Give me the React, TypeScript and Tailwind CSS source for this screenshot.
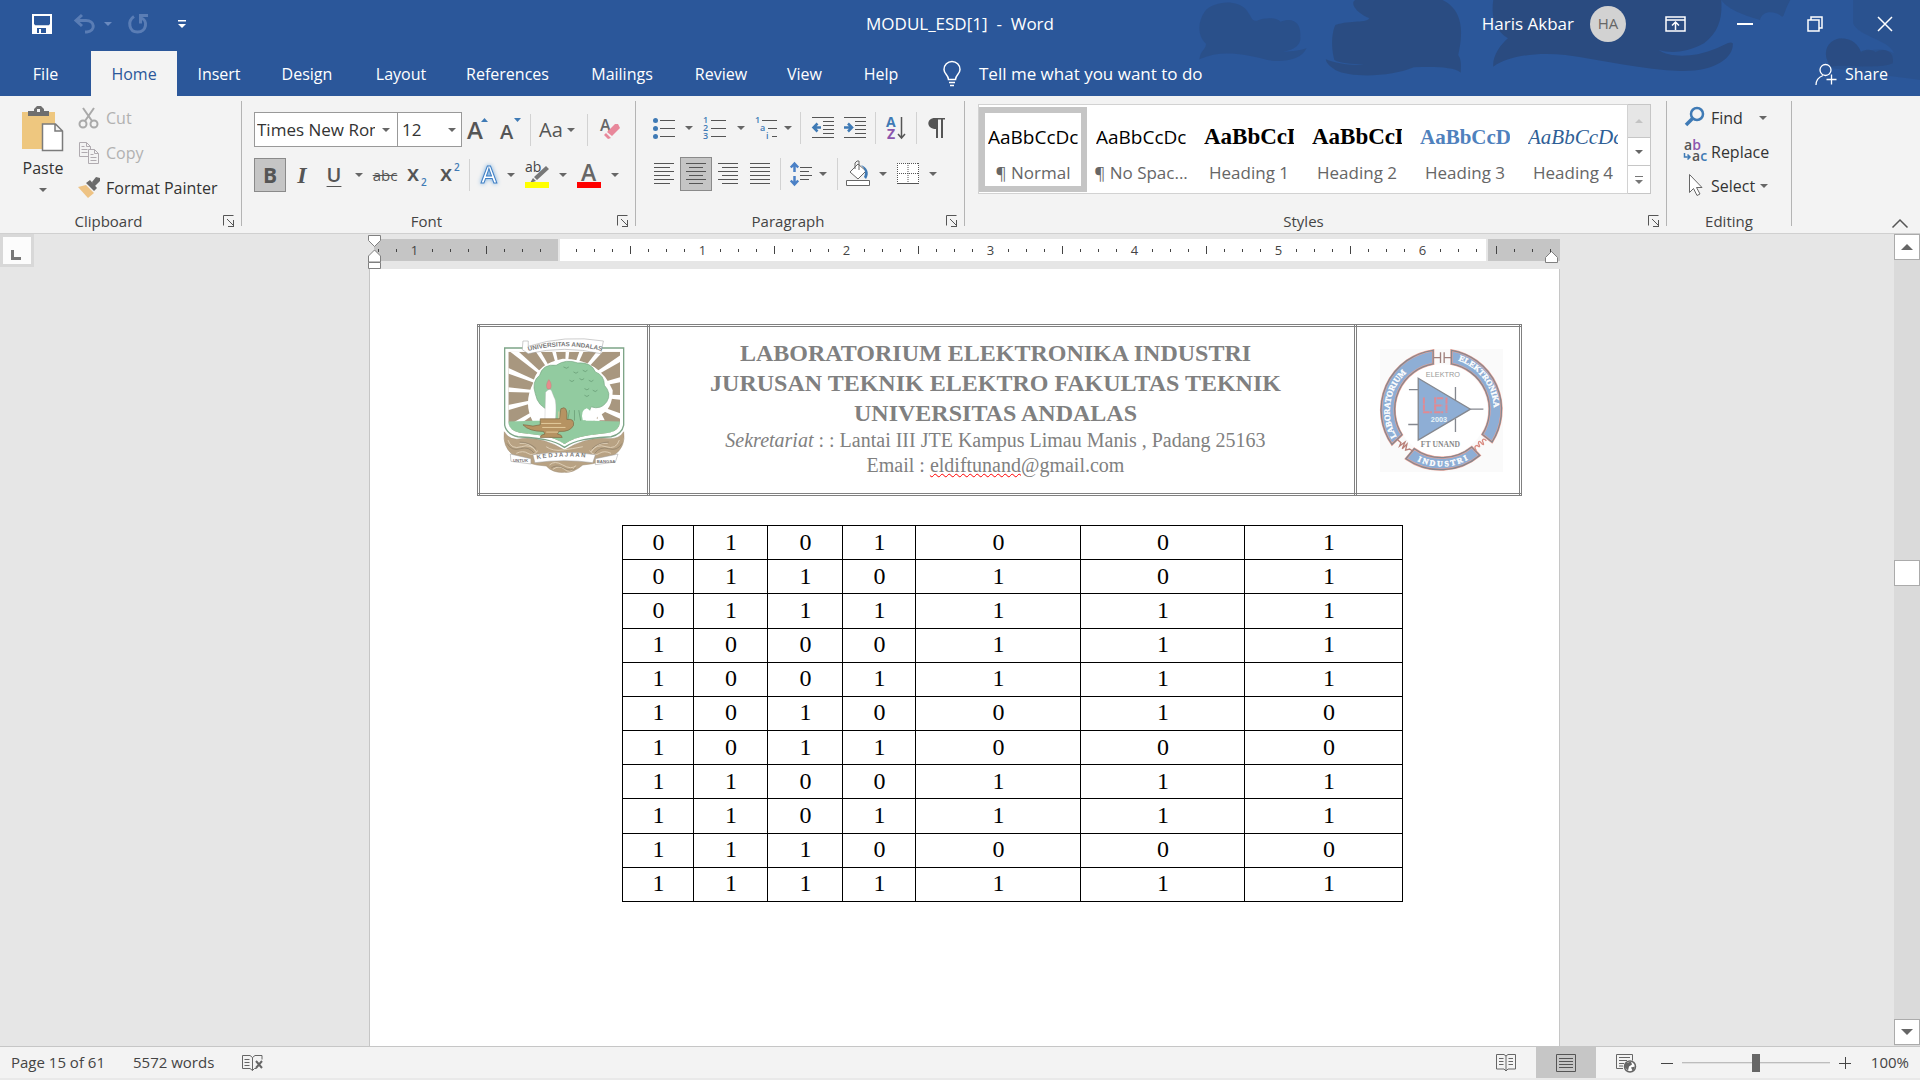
import { ReactNode } from 'react';
import classNames from 'clsx';

const tabs = [
  { name: 'File', width: 'w-[91px]' },
  { name: 'Home', width: 'w-[86px]' },
  { name: 'Insert', width: 'w-[84px]' },
  { name: 'Design', width: 'w-[92px]' },
  { name: 'Layout', width: 'w-[96px]' },
  { name: 'References', width: 'w-[117px]' },
  { name: 'Mailings', width: 'w-[112px]' },
  { name: 'Review', width: 'w-[86px]' },
  { name: 'View', width: 'w-[81px]' },
  { name: 'Help', width: 'w-[72px]' },
];

const sansSample = 'text-[19px] text-black';
const serifSample = "font-['Liberation_Serif',serif]";

const styleItems = [
  { name: '¶ Normal', sample: 'AaBbCcDc', className: sansSample },
  { name: '¶ No Spac...', sample: 'AaBbCcDc', className: sansSample },
  { name: 'Heading 1', sample: 'AaBbCcDc', className: classNames(serifSample, 'text-[23px] font-bold text-black') },
  { name: 'Heading 2', sample: 'AaBbCcDc', className: classNames(serifSample, 'text-[23px] font-bold text-black') },
  { name: 'Heading 3', sample: 'AaBbCcD', className: classNames(serifSample, 'text-[21px] font-bold text-[#4f81bd]') },
  { name: 'Heading 4', sample: 'AaBbCcDc', className: classNames(serifSample, 'text-[21px] text-[#2f6096] italic') },
];

const truthTable = [
  '0101001',
  '0110101',
  '0111111',
  '1000111',
  '1001111',
  '1010010',
  '1011000',
  '1100111',
  '1101111',
  '1110000',
  '1111111',
];

function Caret({ className = 'text-[#666]' }: { className?: string }) {
  return (
    <svg width="8" height="4" viewBox="0 0 8 4" className={className} fill="currentColor">
      <path d="M0 0h8L4 4z" />
    </svg>
  );
}

function DropButton({ label, className }: { label: string; className: string }) {
  return (
    <button aria-label={label} className={classNames('flex h-[34px] items-center justify-center', className)}>
      <Caret />
    </button>
  );
}

function ToolButton({
  label,
  className = 'w-8',
  active,
  children,
}: {
  label: string;
  className?: string;
  active?: boolean;
  children: ReactNode;
}) {
  return (
    <button
      aria-label={label}
      className={classNames('flex h-[34px] items-center justify-center text-[#555]', className, {
        'border border-[#8a8a8a] bg-[#c5c5c5]': active,
      })}
    >
      {children}
    </button>
  );
}

function Separator({ className = 'mx-1' }: { className?: string }) {
  return <div className={classNames('h-8 w-px bg-[#d2d2d2]', className)} />;
}

function Group({
  label,
  width,
  launcher = true,
  children,
}: {
  label: string;
  width: string;
  launcher?: boolean;
  children: ReactNode;
}) {
  return (
    <section aria-label={label} className={classNames('flex shrink-0', width)}>
      <div className="flex min-w-0 flex-1 flex-col">
        <div className="flex-1">{children}</div>
        <div className="flex h-6 items-center">
          <div className="flex-1 text-center text-[15px] leading-5 text-[#444]">{label}</div>
          {launcher && (
            <button aria-label={`${label} settings`} className="flex w-6 justify-center">
              <svg width="12" height="12" viewBox="0 0 12 12" fill="none" stroke="#555">
                <path d="M.5 10.5V.5h10M4 4l6 6M10.500 5v6.500M5 11.500h6" />
              </svg>
            </button>
          )}
        </div>
      </div>
      <div className="mt-1 h-[125px] w-px bg-[#b4b4b4]" />
    </section>
  );
}

// each entry is [x1, x2] of one text line, 4px apart
function LinesIcon({ lines }: { lines: number[][] }) {
  return (
    <svg width="22" height="22" viewBox="0 0 22 22" stroke="#555">
      {lines.map(([x1, x2], i) => (
        <line key={i} x1={x1} x2={x2} y1={0.5 + i * 4} y2={0.5 + i * 4} />
      ))}
    </svg>
  );
}

function TitlePattern() {
  return (
    <svg
      className="absolute top-0 right-0 h-full w-[820px]"
      viewBox="0 0 1568 288"
      preserveAspectRatio="none"
      fill="#2a4b80"
    >
      <path
        opacity=".6"
        d="M190 178C192 150 205 145 202 130C188 110 185 70 200 35C215 5 260 -5 280 30C290 50 290 65 300 62C320 50 340 55 345 65C370 50 385 70 383 110C385 130 375 150 350 155C370 155 385 150 395 145C385 180 350 188 320 180C270 160 230 150 190 178Z"
      />
      <path
        opacity=".9"
        d="M448 180C440 130 445 90 450 75C480 60 510 70 515 55C480 30 480 0 490 0H655C695 30 695 100 685 165C692 180 690 200 690 218C675 200 640 200 600 202C560 230 480 235 450 210C435 195 432 185 432 178C450 190 480 198 505 194C480 192 460 190 448 180Z"
      />
      <path d="M752 0H1188C1190 50 1185 95 1155 130C1120 160 1090 160 1068 150C1090 175 1140 170 1170 150C1190 140 1205 120 1210 130C1212 170 1180 215 1110 213C1040 210 960 180 890 165C830 155 780 170 752 200C750 170 765 135 780 115C752 90 748 40 752 0Z" />
      <path opacity=".6" d="M1188 0H1320C1305 40 1310 60 1300 45C1285 30 1265 35 1262 60C1240 50 1200 30 1188 0Z" />
      <path
        opacity=".4"
        d="M1440 0H1568V240C1520 230 1450 215 1400 205L1395 195C1385 165 1385 130 1410 116C1435 112 1450 130 1455 160C1480 145 1500 145 1518 160C1510 120 1450 110 1440 70Z"
      />
      <path
        opacity=".8"
        d="M1398 200C1380 165 1388 125 1412 116C1438 112 1450 135 1455 155C1468 145 1478 150 1483 157C1500 140 1520 155 1516 190C1490 210 1420 190 1398 200Z"
      />
    </svg>
  );
}

function TitleBar() {
  return (
    <div className="relative flex h-[51px] items-center pb-1">
      <div className="flex w-0 flex-1 items-center">
        <button aria-label="Save" className="ml-8">
          <svg width="20" height="20" viewBox="0 0 20 20" fill="none" stroke="#fff">
            <path strokeWidth="2" d="M1 1h18v18H1z" />
            <path fill="#fff" d="M1 12h18v7H1zM1 9l2 3h14l2-3v5H1z" />
            <path fill="#2b579a" stroke="none" d="M5 14h9v5H5z" />
            <path fill="#fff" stroke="none" d="M7 15h2v4H7z" />
          </svg>
        </button>
        <button aria-label="Undo" className="ml-5">
          <svg width="24" height="20" viewBox="0 0 24 20" fill="none" stroke="#5a7db5" strokeWidth="3">
            <path d="M10 1L4 6.500L10 12M4 6.500H14C23 6.500 24 17 15 18H13" />
          </svg>
        </button>
        <button aria-label="Undo history" className="ml-2">
          <Caret className="text-[#6a8abf]" />
        </button>
        <button aria-label="Redo" className="ml-4">
          <svg width="22" height="20" viewBox="0 0 22 20" fill="none" stroke="#5a7db5" strokeWidth="3">
            <path d="M6 2.500C-1 7 1 18 9.500 18C19 18 20 6 13 4M12.500 9.500V1.500H20" />
          </svg>
        </button>
        <button aria-label="Customize toolbar" className="ml-7">
          <svg width="8" height="8" viewBox="0 0 8 8" fill="#fff">
            <path d="M0 0h8v1.500H0zM0 4h8L4 8z" />
          </svg>
        </button>
      </div>
      <h1 className="text-[17px] whitespace-pre">MODUL_ESD[1]{'  -  '}Word</h1>
      <div className="flex w-0 flex-1 items-center justify-end">
        <span className="mr-4 text-[17px]">Haris Akbar</span>
        <span className="mr-[14px] flex h-9 w-9 items-center justify-center rounded-full bg-[#d2d2d2] text-[15px] text-[#666]">
          HA
        </span>
        <button aria-label="Ribbon display options" className="flex w-[70px] justify-center">
          <svg width="21" height="16" viewBox="0 0 21 16" fill="none" stroke="#fff" strokeWidth="1.500">
            <path d="M1 1h19v14H1zM1 4h19M10.500 14V6.500M7 9.500l3.500-3.500L14 9.500" />
          </svg>
        </button>
        <button aria-label="Minimize" className="flex w-[70px] justify-center">
          <svg width="16" height="16" viewBox="0 0 16 16" stroke="#fff" strokeWidth="2">
            <path d="M0 8h16" />
          </svg>
        </button>
        <button aria-label="Restore" className="flex w-[70px] justify-center">
          <svg width="16" height="16" viewBox="0 0 16 16" fill="none" stroke="#fff" strokeWidth="1.500">
            <path d="M1 4h11v11H1zM4 4V1h11v11h-3" />
          </svg>
        </button>
        <button aria-label="Close" className="flex w-[70px] justify-center">
          <svg width="16" height="16" viewBox="0 0 16 16" stroke="#fff" strokeWidth="1.500">
            <path d="M1 1l14 14M15 1L1 15" />
          </svg>
        </button>
      </div>
    </div>
  );
}

function TabBar() {
  return (
    <nav className="relative flex h-[45px] items-center text-[16px]">
      {tabs.map((tab) => (
        <button
          key={tab.name}
          className={classNames('h-full shrink-0', tab.width, { 'bg-[#f3f3f3] text-[#2b579a]': tab.name === 'Home' })}
        >
          {tab.name}
        </button>
      ))}
      <button className="ml-6 flex items-center gap-4 text-[17px]">
        <svg width="22" height="26" viewBox="0 0 22 26" fill="none" stroke="#fff" strokeWidth="1.500">
          <path d="M7.500 18.500C7.500 14 3 13 3 8.500a8 8 0 0 1 16 0C19 13 14.500 14 14.500 18.500zM8 21.500h6M9 24.500h4" />
        </svg>
        Tell me what you want to do
      </button>
      <button className="mr-8 ml-auto flex items-center gap-2">
        <svg width="22" height="24" viewBox="0 0 22 24" fill="none" stroke="#fff" strokeWidth="1.300">
          <circle cx="10.500" cy="8" r="5.500" />
          <path d="M1 23c0-5 3-8 7-9.500M16.500 12.500v10M11.500 17.500h10" />
        </svg>
        Share
      </button>
    </nav>
  );
}

function ClipboardGroup() {
  return (
    <Group label="Clipboard" width="w-[242px]">
      <div className="flex pt-[9px] text-[16px] text-[#333]">
        <button className="ml-4 flex w-[54px] flex-col items-center">
          <svg width="42" height="46" viewBox="0 0 42 46">
            <path fill="#eec77f" d="M0 6h33v37H0z" />
            <path fill="#6f6f6f" d="M6 10V5h6V3l3-3h4l3 3v2h5v5z" />
            <path fill="#f3f3f3" d="M15 3h3v3h-3z" />
            <path fill="#fff" stroke="#7b7b7b" strokeWidth="1.500" d="M20.500 18h13l7 7v19.500h-20zM33 18v7h7" />
          </svg>
          <span className="mt-1 leading-6">Paste</span>
          <span className="mt-2">
            <Caret />
          </span>
        </button>
        <div className="flex flex-col gap-[11px] pl-2 leading-6">
          <button className="flex items-center gap-[6px] text-[#b1b1b1]">
            <svg width="22" height="22" viewBox="0 0 22 22" fill="none" stroke="#a9a9a9" strokeWidth="2">
              <circle cx="5" cy="17" r="3.500" />
              <circle cx="16" cy="17" r="3.500" />
              <path d="M5 1l9 13M16 1L7 14" />
            </svg>
            Cut
          </button>
          <button className="flex items-center gap-[6px] text-[#b1b1b1]">
            <svg width="22" height="22" viewBox="0 0 22 22" fill="#f3f3f3" stroke="#b0abb0">
              <path d="M1.500.5h7l4 4v10h-11zM8.500.5v4h4M3.500 4.500h3M3.500 7.500h6M3.500 10.500h6" />
              <path d="M10.500 7.500h6l4 4v10h-10zM16.500 7.500v4h4M12.500 12.500h3M12.500 15.500h6M12.500 18.500h6" />
            </svg>
            Copy
          </button>
          <button className="flex items-center gap-[6px]">
            <svg width="22" height="22" viewBox="0 0 22 22">
              <path fill="#eec384" d="M0 10l8-2 8 8-6 5z" />
              <path fill="#6b6b6b" d="M8 6l4-3 7 8-3 3zM14 5l4-5 4 1v3l-5 5z" />
            </svg>
            Format Painter
          </button>
        </div>
      </div>
    </Group>
  );
}

function FontGroup() {
  return (
    <Group label="Font" width="w-[394px]">
      <div className="flex flex-col gap-[11px] pt-[15px] pl-3">
        <div className="flex items-center">
          <div className="relative">
            <select
              aria-label="Font name"
              className="h-[35px] w-[144px] appearance-none overflow-hidden border border-[#999] bg-white pr-[22px] pl-[2px] text-[17px] text-[#333]"
            >
              <option>Times New Roman</option>
            </select>
            <span className="pointer-events-none absolute inset-y-0 right-2 flex items-center">
              <Caret />
            </span>
          </div>
          <div className="relative -ml-px">
            <select
              aria-label="Font size"
              className="h-[35px] w-[65px] appearance-none border border-[#999] bg-white pl-1 text-[17px] text-[#333]"
            >
              <option>12</option>
            </select>
            <span className="pointer-events-none absolute inset-y-0 right-[6px] flex items-center">
              <Caret />
            </span>
          </div>
          <ToolButton label="Grow font">
            <svg width="22" height="24" viewBox="0 0 22 24">
              <text x="0" y="21" fontSize="24" fontWeight="600" fill="#555">
                A
              </text>
              <path fill="#3f7ab5" d="M14 4h7l-3.500-4z" />
            </svg>
          </ToolButton>
          <ToolButton label="Shrink font">
            <svg width="22" height="24" viewBox="0 0 22 24">
              <text x="1" y="21" fontSize="20" fontWeight="600" fill="#555">
                A
              </text>
              <path fill="#3f7ab5" d="M15 0h7l-3.500 4z" />
            </svg>
          </ToolButton>
          <Separator />
          <ToolButton label="Change case" className="w-11 gap-1">
            <span className="text-[20px] leading-6">Aa</span>
            <Caret />
          </ToolButton>
          <Separator className="mr-1 ml-2" />
          <ToolButton label="Clear formatting" className="w-9">
            <svg width="22" height="24" viewBox="0 0 22 24">
              <text x="1" y="13" fontSize="16" fontWeight="600" fill="#666">
                A
              </text>
              <path fill="#e8879a" d="M8 14l8-8h3l2 4-8 8zM7 15l5 5-3 1-4-4z" />
            </svg>
          </ToolButton>
        </div>
        <div className="flex items-center">
          <ToolButton label="Bold" active>
            <span className="text-[21px] leading-6 font-bold">B</span>
          </ToolButton>
          <ToolButton label="Italic">
            <span className="font-['Liberation_Serif',serif] text-[24px] leading-6 font-bold italic">I</span>
          </ToolButton>
          <ToolButton label="Underline">
            <span className="text-[20px] leading-6 font-semibold underline decoration-1 underline-offset-4">U</span>
          </ToolButton>
          <DropButton label="Underline styles" className="w-[18px]" />
          <ToolButton label="Strikethrough" className="w-[34px]">
            <span className="text-[15px] leading-6 line-through">abc</span>
          </ToolButton>
          <ToolButton label="Subscript">
            <svg width="22" height="24" viewBox="0 0 22 24">
              <text x="0" y="18" fontSize="22" fontWeight="600" fill="#555">
                x
              </text>
              <text x="14" y="23" fontSize="10" fontWeight="600" fill="#3f7ab5">
                2
              </text>
            </svg>
          </ToolButton>
          <ToolButton label="Superscript">
            <svg width="22" height="24" viewBox="0 0 22 24">
              <text x="1" y="18" fontSize="22" fontWeight="600" fill="#555">
                x
              </text>
              <text x="15" y="8" fontSize="10" fontWeight="600" fill="#3f7ab5">
                2
              </text>
            </svg>
          </ToolButton>
          <Separator className="mx-[3px]" />
          <ToolButton label="Text effects">
            <svg width="24" height="26" viewBox="0 0 24 26" fontSize="24" fontWeight="600">
              <text x="4" y="21" fill="#fff" stroke="#3f7fc4" strokeWidth="1" className="drop-shadow-[0_0_2px_#6fa8dc]">
                A
              </text>
            </svg>
          </ToolButton>
          <DropButton label="Text effect options" className="w-3" />
          <ToolButton label="Highlight" className="w-10">
            <svg width="26" height="26" viewBox="0 0 26 26">
              <text x="1" y="10" fontSize="14" fill="#444">
                ab
              </text>
              <path fill="#777" d="M22 4l3 3L13 18l-3-3zM9 16l3 3-6 2z" />
              <path fill="#ff0" d="M1 20h24v6H1z" />
            </svg>
          </ToolButton>
          <DropButton label="Highlight colors" className="w-3" />
          <ToolButton label="Font color" className="w-10">
            <svg width="26" height="26" viewBox="0 0 26 26">
              <text x="5" y="19" fontSize="23" fontWeight="600" fill="#666">
                A
              </text>
              <path fill="red" d="M1 20h24v6H1z" />
            </svg>
          </ToolButton>
          <DropButton label="Font colors" className="w-3" />
        </div>
      </div>
    </Group>
  );
}

function ParagraphGroup() {
  return (
    <Group label="Paragraph" width="w-[329px]">
      <div className="flex flex-col gap-3 pt-[14px] pl-3">
        <div className="flex items-center">
          <ToolButton label="Bullets">
            <svg width="22" height="22" viewBox="0 0 22 22" fill="#3f7ab5" stroke="#555">
              <path d="M7 3.500h15M7 11.500h15M7 19.500h15" />
              <g stroke="none">
                <circle cx="2.500" cy="3.500" r="2.500" />
                <circle cx="2.500" cy="11.500" r="2.500" />
                <circle cx="2.500" cy="19.500" r="2.500" />
              </g>
            </svg>
          </ToolButton>
          <DropButton label="Bullet library" className="w-[18px]" />
          <ToolButton label="Numbering" className="w-[34px]">
            <svg width="24" height="24" viewBox="0 0 24 24" fontSize="9" fontWeight="600" fill="#3f7ab5">
              <path stroke="#555" d="M8 4.500h15M8 12.500h15M8 20.500h15" />
              <text x="0" y="7">1</text>
              <text x="0" y="15">2</text>
              <text x="0" y="23">3</text>
            </svg>
          </ToolButton>
          <DropButton label="Numbering library" className="w-[18px]" />
          <ToolButton label="Multilevel list">
            <svg width="24" height="24" viewBox="0 0 24 24" fontSize="9" fontWeight="600" fill="#3f7ab5">
              <path stroke="#555" d="M8 4.500h15M14 12.500h9M18 20.500h5" />
              <text x="1" y="7">1</text>
              <text x="6" y="15">a</text>
              <text x="12" y="23">i</text>
            </svg>
          </ToolButton>
          <DropButton label="List library" className="w-3" />
          <Separator className="mx-[6px]" />
          <ToolButton label="Decrease indent">
            <svg width="22" height="22" viewBox="0 0 22 22" fill="none" stroke="#555">
              <path d="M0 .5h22M11 4.500h11M11 8.500h11M11 12.500h11M11 16.500h11M0 20.500h22" />
              <path stroke="#3f7ab5" strokeWidth="2.500" d="M9 10.500H1.500M5.500 6.500l-4 4 4 4" />
            </svg>
          </ToolButton>
          <ToolButton label="Increase indent">
            <svg width="22" height="22" viewBox="0 0 22 22" fill="none" stroke="#555">
              <path d="M0 .5h22M11 4.500h11M11 8.500h11M11 12.500h11M11 16.500h11M0 20.500h22" />
              <path stroke="#3f7ab5" strokeWidth="2.500" d="M0 10.500h8M4 6.500l4 4-4 4" />
            </svg>
          </ToolButton>
          <Separator />
          <ToolButton label="Sort">
            <svg width="22" height="24" viewBox="0 0 22 24" fontSize="14" fontWeight="700">
              <text x="1" y="11" fill="#3f7ab5">
                A
              </text>
              <text x="2" y="23" fill="#8b56ad">
                Z
              </text>
              <path fill="none" stroke="#555" strokeWidth="1.500" d="M16.500 1v21M13 18l3.500 4 3.500-4" />
            </svg>
          </ToolButton>
          <Separator />
          <ToolButton label="Show marks">
            <svg width="18" height="22" viewBox="0 0 18 22" fill="#555">
              <path d="M17 1v1.500h-2V21h-2V2.500h-3V21H8v-9C-2 12-2 1 7 1z" />
            </svg>
          </ToolButton>
        </div>
        <div className="flex items-center">
          <ToolButton label="Align left">
            <LinesIcon lines={[[1, 21], [1, 17], [1, 21], [1, 17], [1, 21], [1, 17]]} />
          </ToolButton>
          <ToolButton label="Center" active>
            <LinesIcon lines={[[1, 21], [4, 18], [1, 21], [4, 18], [1, 21], [4, 18]]} />
          </ToolButton>
          <ToolButton label="Align right">
            <LinesIcon lines={[[1, 21], [5, 21], [1, 21], [5, 21], [1, 21], [5, 21]]} />
          </ToolButton>
          <ToolButton label="Justify">
            <LinesIcon lines={[[1, 21], [1, 21], [1, 21], [1, 21], [1, 21], [1, 21]]} />
          </ToolButton>
          <Separator />
          <ToolButton label="Line spacing">
            <svg width="22" height="24" viewBox="0 0 22 24" fill="none" stroke="#555">
              <path d="M10 5.500h12M10 9.500h9M10 13.500h12M10 17.500h9" />
              <path stroke="#4a80c6" strokeWidth="2.500" d="M4.500 2v8M.8 5.500l3.700-4 3.700 4M4.500 22v-8M.8 18.500l3.700 4 3.700-4" />
            </svg>
          </ToolButton>
          <DropButton label="Line spacing options" className="w-3" />
          <Separator className="mx-2" />
          <ToolButton label="Shading" className="w-6">
            <svg width="24" height="26" viewBox="0 0 24 26" fill="#fff" stroke="#666">
              <path d="M4 11l8-8 8 7-8 8z" />
              <path fill="none" d="M9 8V2l2-2h2v9" />
              <path fill="#3f7ab5" stroke="none" d="M15 4c6 2 9 8 5 14l-2-2c2-5 1-8-3-12z" />
              <path d="M.5 19.500h23v5H.5z" />
            </svg>
          </ToolButton>
          <DropButton label="Shading colors" className="w-[26px]" />
          <ToolButton label="Borders" className="w-6">
            <svg width="22" height="22" viewBox="0 0 22 22" fill="#fff" stroke="#555">
              <path stroke="none" d="M0 0h22v21H0z" />
              <path strokeDasharray="1 1" d="M0 .5h22M.5 0v21M21.500 0v21M11 0v21M0 10.500h22" />
              <path d="M0 20.500h22" />
            </svg>
          </ToolButton>
          <DropButton label="Border options" className="w-[26px]" />
        </div>
      </div>
    </Group>
  );
}

function StylesGroup() {
  return (
    <Group label="Styles" width="w-[702px]">
      <div className="mt-[7px] ml-[13px] flex h-[90px] w-[673px]">
        <div className="flex flex-1 border border-[#d2d2d2] bg-white">
          {styleItems.map((item, index) => (
            <button
              key={item.name}
              className={classNames('my-[2px] flex h-[85px] w-[108px] shrink-0 flex-col items-center border-[6px]', {
                'border-[#c5c5c5]': index === 0,
                'border-transparent': index !== 0,
              })}
            >
              <span className={classNames('mt-2 h-8 w-[90px] overflow-hidden text-left leading-8', item.className)}>
                {item.sample}
              </span>
              <span className="mt-2 text-[17px] leading-6 whitespace-nowrap text-[#666]">{item.name}</span>
            </button>
          ))}
        </div>
        <div className="flex w-[23px] flex-col border border-l-0 border-[#c6c6c6] bg-white">
          <button aria-label="Scroll up" className="flex h-8 items-center justify-center bg-[#e6e6e6]">
            <svg width="8" height="4" viewBox="0 0 8 4" fill="#c3c3c3">
              <path d="M0 4h8L4 0z" />
            </svg>
          </button>
          <button aria-label="Scroll down" className="flex flex-1 items-center justify-center border-y border-[#c6c6c6]">
            <Caret />
          </button>
          <button aria-label="More styles" className="flex flex-1 items-center justify-center">
            <svg width="8" height="8" viewBox="0 0 8 8" fill="#777">
              <path d="M0 0h8v1H0zM0 4h8L4 8z" />
            </svg>
          </button>
        </div>
      </div>
    </Group>
  );
}

function EditingGroup() {
  return (
    <Group label="Editing" width="w-[125px]" launcher={false}>
      <div className="flex flex-col gap-[10px] pt-[9px] pl-4 text-[16px] leading-6 text-[#333]">
        <button className="flex items-center gap-1">
          <svg width="24" height="22" viewBox="0 0 24 22" fill="none" stroke="#3f7ab5" strokeWidth="2.500">
            <circle cx="14" cy="7" r="6" />
            <path strokeWidth="3.500" d="M10 11l-7 7" />
          </svg>
          Find
          <span className="ml-3">
            <Caret />
          </span>
        </button>
        <button className="flex items-center gap-1">
          <svg width="24" height="24" viewBox="0 0 24 24" fontWeight="600" fill="#555">
            <text x="1" y="10" fontSize="14">
              a<tspan fill="#8b56ad">b</tspan>
            </text>
            <text x="9" y="21" fontSize="14">
              a<tspan fill="#3f7ab5">c</tspan>
            </text>
            <path fill="none" stroke="#3f7ab5" strokeWidth="1.500" d="M1.500 13v4H7M4.500 14.500L7 17l-2.500 2.500" />
          </svg>
          Replace
        </button>
        <button className="flex items-center gap-1">
          <svg width="24" height="24" viewBox="0 0 24 24" fill="#fff" stroke="#666">
            <path d="M6.500 .5v18l4-4 3.500 7 3-1.500-3.500-6.500h5.500z" />
          </svg>
          Select
          <span className="ml-px">
            <Caret />
          </span>
        </button>
      </div>
    </Group>
  );
}

function RulerTicks({ from, to }: { from: number; to: number }) {
  const ticks = Array.from({ length: to - from + 1 }, (_, i) => from + i);
  return (
    <>
      {ticks.map((tick) => (
        <div key={tick} className="flex w-[18px] shrink-0 items-center justify-center text-[13px] text-[#444]">
          {tick % 8 === 0 ? (
            Math.abs(tick / 8)
          ) : (
            <div className={classNames('w-px bg-[#444]', tick % 4 === 0 ? 'h-2' : 'h-[3px]')} />
          )}
        </div>
      ))}
    </>
  );
}

function Ruler() {
  return (
    <div className="relative mt-[5px] mb-2 flex h-[22px] pl-[5px] leading-[22px]">
      <div className="flex w-[184px] justify-end overflow-hidden bg-[#c5c5c5] pr-2">
        <RulerTicks from={-10} to={-1} />
      </div>
      <div className="ml-[2px] flex w-[926px] bg-white pl-2">
        <RulerTicks from={1} to={51} />
      </div>
      <div className="ml-[2px] flex w-[72px] bg-[#c5c5c5]">
        <RulerTicks from={52} to={55} />
      </div>
      <svg className="absolute -top-1 -left-px" width="13" height="34" viewBox="0 0 13 34" fill="#fff" stroke="#808080">
        <path d="M.5.500h12v5l-6 6-6-6zM.5 27v-6l6-6 6 6v6zM.5 27.500h12v6H.5z" />
      </svg>
      <svg className="absolute top-3 right-[2px]" width="13" height="12" viewBox="0 0 13 12" fill="#fff" stroke="#808080">
        <path d="M.5 11.500v-5l6-6 6 6v5z" />
      </svg>
    </div>
  );
}

function AndalasLogo() {
  const rays = Array.from({ length: 20 }, (_, i) => i * 18 + 4);
  return (
    <svg className="mx-auto" width="123" height="138" viewBox="100 80 370 415" role="img" aria-label="Universitas Andalas">
      <defs>
        <clipPath id="shield">
          <path d="M116 124H452V335Q450 362 420 368C370 374 320 376 285 402C250 376 200 374 150 368Q118 362 116 335Z" />
        </clipPath>
        <path id="andalasTop" d="M176 122Q285 94 396 122" />
        <path id="andalasBottom" d="M202 448Q285 432 372 446" />
      </defs>
      <g fill="#b8a283" stroke="#9b8b73" strokeWidth="1.500">
        <path d="M104 365Q120 395 160 385Q220 380 285 420Q350 380 410 385Q450 390 463 365Q470 410 435 435Q400 460 340 465Q310 490 285 487Q250 490 230 468Q170 465 130 435Q98 410 104 365Z" />
        <g fill="none" stroke="#ddceb6" strokeWidth="3">
          <path d="M115 390q10 30 40 20t45 15q-20-30-50-25M140 430q20-10 35 0t30-8M450 390q-10 30-40 20t-45 15q20-30 50-25M425 430q-20-10-35 0t-30-8M240 465q15-15 40 0t40 2M250 478q20-14 35 0t30-4M230 410q20 14 50 10t60-10" />
        </g>
        <g fill="none" stroke="#8b7d68" strokeWidth="2">
          <path d="M112 400q14 24 40 16t42 14M150 396q30 0 50 20M458 400q-14 24-40 16t-42 14M418 396q-30 0-50 20M245 474q15-12 38 0t36 0" />
        </g>
      </g>
      <path
        d="M105 113H463V345Q458 372 425 380C370 384 320 386 285 412C250 386 200 384 145 380Q110 372 105 345Z"
        fill="#fff"
        stroke="#7ea588"
        strokeWidth="4"
      />
      <g clipPath="url(#shield)">
        <path fill="#a8977f" d="M110 120h350v300H110z" />
        {rays.map((angle) => (
          <path key={angle} d="M285 250L520 240V260Z" fill="#fff" transform={`rotate(${angle} 285 250)`} />
        ))}
        <path fill="#fff" d="M190 220Q200 160 280 145Q390 145 430 240Q430 300 390 315L370 335H190Q160 280 190 220Z" />
        <path
          fill="#92cba0"
          stroke="#78a884"
          strokeWidth="2"
          d="M197 250Q185 215 210 195Q220 160 260 165Q290 145 325 158Q365 155 378 185Q405 195 405 225Q428 250 412 275Q395 300 365 290Q350 330 345 335H265L240 300Q205 290 197 250Z"
        />
        <path
          fill="none"
          stroke="#62966f"
          strokeWidth="2"
          d="M282 170q10 8 16 0M312 185q8 8 14 0M340 180q8 8 14 0M330 205q8 8 14 0M358 210q8 8 14 0M345 235q8 8 14 0M300 210q8 8 14 0M370 240q8 8 14 0M345 255q8 8 14 0M300 300l-6 34M315 300v34M328 300l6 34"
        />
        <path fill="#fff" d="M340 330q-8-30 12-36q18 8 16 36zM384 330q0-20 10-24l12 24z" />
        <path fill="#92cba0" d="M110 334Q280 328 455 334V420H110z" />
      </g>
      <path fill="#fff" stroke="#aaa" d="M226 328l2-82q12-14 18-4l8 20q8 10 4 66z" />
      <path fill="#e88c8c" stroke="#b77" d="M238 208q-12 18-4 28h8q8-12-4-28z" />
      <path
        fill="#b69362"
        stroke="#7d6642"
        strokeWidth="2"
        d="M160 344q8 0 30 4l22-4v-18h58l4-30q22-14 18 32q24-4 20 18q-10 20-44 18l-4 8q14 2 14 10h-66q0-8 14-10l-4-8q-44 0-62-20z"
      />
      <path fill="none" stroke="#e2cb9d" strokeWidth="3" d="M215 340h60M218 352h70M230 366h36M268 324v-20" />
      <g fill="#fff" stroke="#999" strokeWidth="1.500">
        <path d="M160 92H176V108Q285 72 402 92L394 130Q285 104 176 130L158 118Z" />
        <path d="M190 434Q285 420 378 434L370 458Q285 446 196 458Z" />
        <path d="M122 432l62 14v16l-60-8zM446 432l-68 14v18l60-8z" />
      </g>
      <g fill="#777" fontWeight="700" fontFamily="Liberation Sans, sans-serif">
        <text fontSize="19">
          <textPath href="#andalasTop">UNIVERSITAS ANDALAS</textPath>
        </text>
        <text fontSize="18">
          <textPath href="#andalasBottom">K E D J A J A A N</textPath>
        </text>
        <text x="130" y="456" fontSize="13">
          UNTUK
        </text>
        <text x="382" y="460" fontSize="13">
          BANGSA
        </text>
      </g>
    </svg>
  );
}

function LeiLogo() {
  return (
    <svg
      className="mx-auto"
      width="123"
      height="123"
      viewBox="120 120 370 370"
      role="img"
      aria-label="Laboratorium Elektronika Industri"
    >
      <defs>
        <path id="leiLeft" d="M170 384A156 156 0 0 1 290 151" />
        <path id="leiRight" d="M355 155A158 158 0 0 1 446 376" />
        <path id="leiBottom" d="M232 457A168 168 0 0 0 402 442" />
      </defs>
      <path fill="#fafafa" d="M120 120h370v370H120z" />
      <circle cx="305" cy="304" r="138" fill="#fff" />
      <g fill="#8eaed5" stroke="#efa194" strokeWidth="7">
        <path d="M280 124V165A140 140 0 0 0 186 378L156 407A181 181 0 0 1 280 124Z" />
        <path d="M335 124V165A140 140 0 0 1 428 377L457 400A181 181 0 0 0 335 124Z" />
        <path d="M223 420A142 142 0 0 0 396 415L420 440A182 182 0 0 1 198 450Z" />
      </g>
      <g fill="none" stroke="#85888f" strokeWidth="4">
        <path d="M280 124V165A140 140 0 0 0 186 378L156 407A181 181 0 0 1 280 124Z" />
        <path d="M335 124V165A140 140 0 0 1 428 377L457 400A181 181 0 0 0 335 124Z" />
        <path d="M223 420A142 142 0 0 0 396 415L420 440A182 182 0 0 1 198 450Z" />
        <path d="M282 146h20M302 130v32M313 130v32M313 146h22" stroke="#a0807c" />
        <path d="M173 393l10 9-4 10 16-12-8 20 14-14-4 18 12-3 9 6" stroke="#b98078" />
        <path d="M410 426q-10-14 2-16q14 10 4-6q0-12 10 0q10 10 2-8q2-10 12 0" stroke="#d98a80" />
        <path d="M207 242h28M205 347h30M347 234v40M347 330v40M392 301h39" />
      </g>
      <path d="M235 208L392 301L235 394Z" fill="#8eaed5" stroke="#85888f" strokeWidth="4" />
      <g fill="#fff" stroke="#fff" fontSize="25" fontWeight="700" fontFamily="Liberation Serif, serif">
        <text>
          <textPath href="#leiLeft">LABORATORIUM</textPath>
        </text>
        <text>
          <textPath href="#leiRight">ELEKTRONIKA</textPath>
        </text>
        <text fontSize="24">
          <textPath href="#leiBottom">I N D U S T R I</textPath>
        </text>
      </g>
      <text x="258" y="203" fontSize="22" fill="#999" fontFamily="Liberation Sans, sans-serif">
        ELEKTRO
      </text>
      <g fill="none" stroke="#e08a94" strokeWidth="6" strokeDasharray="19 2">
        <path d="M252 266v44h24M310 268h-24v42h24M286 290h22M320 266v46" />
      </g>
      <text x="273" y="339" fontSize="22" fill="#e8f4f8" fontWeight="700" fontFamily="Liberation Sans, sans-serif">
        2003
      </text>
      <text x="243" y="416" fontSize="23" fill="#888" fontWeight="700" fontFamily="Liberation Serif, serif">
        FT UNAND
      </text>
    </svg>
  );
}

function DocumentPage() {
  const headerCell = 'border-[3px] border-double border-[#808080]';
  return (
    <article className="flex-1 overflow-hidden border-x border-[#c6c6c6] bg-white pt-[55px] pl-[107px] font-['Liberation_Serif',serif]">
      <table className="h-[172px] w-[1045px] table-fixed border-collapse text-[#808080]">
        <colgroup>
          <col className="w-[170px]" />
          <col />
          <col className="w-[165px]" />
        </colgroup>
        <tbody>
          <tr>
            <td className={classNames(headerCell, 'pb-2 pl-[2px]')}>
              <AndalasLogo />
            </td>
            <td className={classNames(headerCell, 'pt-[11px] pr-3 text-center align-top text-[20px] leading-[25px]')}>
              <div className="text-[24px] leading-[30px] font-bold">
                <p>LABORATORIUM ELEKTRONIKA INDUSTRI</p>
                <p>JURUSAN TEKNIK ELEKTRO FAKULTAS TEKNIK</p>
                <p>UNIVERSITAS ANDALAS</p>
              </div>
              <p>
                <i>Sekretariat</i> : : Lantai III JTE Kampus Limau Manis , Padang 25163
              </p>
              <p>
                Email :{' '}
                <span className="underline decoration-[#f00] decoration-wavy decoration-1 underline-offset-1 [text-decoration-skip-ink:none]">
                  eldiftunand
                </span>
                @gmail.com
              </p>
            </td>
            <td className={classNames(headerCell, 'pl-2')}>
              <LeiLogo />
            </td>
          </tr>
        </tbody>
      </table>
      <table className="mt-[29px] ml-[145px] h-[377px] w-[781px] table-fixed border-collapse text-center text-[24px] leading-8 text-black">
        <colgroup>
          <col className="w-[71px]" />
          <col className="w-[74px]" />
          <col className="w-[75px]" />
          <col className="w-[73px]" />
          <col className="w-[165px]" />
          <col className="w-[164px]" />
          <col />
        </colgroup>
        <tbody>
          {truthTable.map((row) => (
            <tr key={row}>
              {row.split('').map((value, index) => (
                <td key={index} className="border border-black pb-[2px] pl-[2px] leading-[30px] last:pl-3">
                  {value}
                </td>
              ))}
            </tr>
          ))}
        </tbody>
      </table>
    </article>
  );
}

function ScrollBar() {
  return (
    <div className="flex w-[26px] flex-col bg-[#dadada] pb-px">
      <button aria-label="Page up" className="flex h-[26px] items-center justify-center border border-[#ababab] bg-white">
        <svg width="12" height="6" viewBox="0 0 12 6" fill="#666">
          <path d="M0 6h12L6 0z" />
        </svg>
      </button>
      <div className="flex flex-1 flex-col">
        <div className="flex-[300]" />
        <div className="h-[26px] border border-[#ababab] bg-white" />
        <div className="flex-[434]" />
      </div>
      <button aria-label="Page down" className="flex h-[26px] items-center justify-center border border-[#ababab] bg-white">
        <svg width="12" height="6" viewBox="0 0 12 6" fill="#666">
          <path d="M0 0h12L6 6z" />
        </svg>
      </button>
    </div>
  );
}

function StatusBar() {
  return (
    <footer className="flex h-[34px] shrink-0 items-center border-t border-b-2 border-t-[#c6c6c6] border-b-[#e9e9e9] bg-[#f3f3f3] pl-[11px] text-[15px] text-[#444]">
      <span>Page 15 of 61</span>
      <span className="ml-7">5572 words</span>
      <button aria-label="Proofing" className="ml-7">
        <svg width="22" height="18" viewBox="0 0 22 18" fill="none" stroke="#666">
          <path d="M10.500 3.500L8 1.500H.5v13H8l2.500 2zM10.500 16.500l2-2h2M10.500 3.500l2.500-2h7v4M2.500 5.500h5M2.500 8.500h5M2.500 11.500h5" />
          <path strokeWidth="2" d="M14 7l6 7M20 7l-6 7" />
        </svg>
      </button>
      <div className="ml-auto flex h-full items-center">
        <button aria-label="Read mode" className="flex h-full w-[60px] items-center justify-center">
          <svg width="20" height="18" viewBox="0 0 20 18" fill="none" stroke="#666">
            <path d="M.5.500H8l2 1.500 2-1.500h7.500v14.500H12l-2 2-2-2H.5zM10 2v15M3 4.500h4.500M3 7.500h4.500M3 10.500h4.500M12.500 4.500H17M12.500 7.500H17M12.500 10.500H17" />
          </svg>
        </button>
        <button aria-label="Print layout" className="flex h-full w-[60px] items-center justify-center bg-[#c6c6c6]">
          <svg width="20" height="18" viewBox="0 0 20 18" fill="none" stroke="#555">
            <path d="M.5.500h19v17H.5zM3 4.500h14M3 7.500h14M3 10.500h14M3 13.500h14" />
          </svg>
        </button>
        <button aria-label="Web layout" className="flex h-full w-[60px] items-center justify-center">
          <svg width="20" height="18" viewBox="0 0 20 18" fill="none" stroke="#666">
            <path d="M7 14.500H.5V.5h16v6M3 3.500h11M3 6.500h8M3 9.500h5M3 12h4" />
            <circle cx="14" cy="12.500" r="5.500" fill="#fff" strokeWidth="1.500" />
            <path fill="#666" stroke="none" d="M9 9.500l6-2 1 3-3 2-1 4-3-3zM15 13.500l4-1-2 5z" />
          </svg>
        </button>
        <button aria-label="Zoom out" className="ml-[5px]">
          <svg width="12" height="12" viewBox="0 0 12 12" stroke="#444">
            <path d="M0 6.500h12" />
          </svg>
        </button>
        <input
          type="range"
          aria-label="Zoom"
          min="0"
          max="100"
          defaultValue="50"
          className="mx-[9px] h-[18px] w-[148px] appearance-none bg-linear-to-b from-transparent from-[8px] via-[#ababab] via-[8px] to-transparent to-[10px] [&::-webkit-slider-thumb]:h-[18px] [&::-webkit-slider-thumb]:w-2 [&::-webkit-slider-thumb]:appearance-none [&::-webkit-slider-thumb]:bg-[#666]"
        />
        <button aria-label="Zoom in">
          <svg width="12" height="12" viewBox="0 0 12 12" stroke="#444">
            <path d="M0 6.500h12M6.500 0v12" />
          </svg>
        </button>
        <span className="mr-[11px] ml-5">100%</span>
      </div>
    </footer>
  );
}

function App() {
  return (
    <div className="flex h-screen flex-col overflow-hidden bg-[#e6e6e6] font-['Open_Sans','Noto_Sans',sans-serif] [&_svg]:overflow-visible">
      <header className="relative shrink-0 bg-[#2b579a] text-white">
        <TitlePattern />
        <TitleBar />
        <TabBar />
      </header>
      <div className="flex h-[138px] shrink-0 border-b border-[#d0d0d0] bg-[#f3f3f3] pt-px">
        <ClipboardGroup />
        <FontGroup />
        <ParagraphGroup />
        <StylesGroup />
        <EditingGroup />
        <button aria-label="Collapse ribbon" className="mr-3 mb-[5px] ml-auto self-end">
          <svg width="16" height="9" viewBox="0 0 16 9" fill="none" stroke="#555" strokeWidth="1.500">
            <path d="M.5 8.500L8 1l7.500 7.500" />
          </svg>
        </button>
      </div>
      <main className="flex min-h-0 flex-1">
        <div className="w-[34px]">
          <button
            aria-label="Tab selector"
            className="flex h-[33px] w-full items-end border-[3px] border-[#d8d8d8] bg-[#fcfcfc] pb-1 pl-2"
          >
            <svg width="10" height="10" viewBox="0 0 10 10" fill="#777">
              <path d="M0 0h3v7h7v3H0z" />
            </svg>
          </button>
        </div>
        <div className="flex min-w-0 flex-1 justify-center">
          <div className="flex w-[1191px] shrink-0 flex-col">
            <Ruler />
            <DocumentPage />
          </div>
        </div>
        <ScrollBar />
      </main>
      <StatusBar />
    </div>
  );
}

export default App;
